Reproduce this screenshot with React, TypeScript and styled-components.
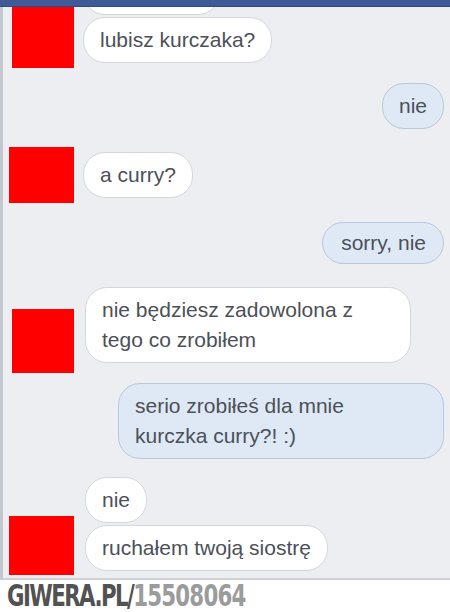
import styled, { createGlobalStyle } from "styled-components"

const GlobalStyle = createGlobalStyle`
    html, body {
        margin: 0;
        padding: 0;
        background: #ffffff;
    }
    body {
        font-family: 'Liberation Sans', Arial, sans-serif;
    }
`

type Incoming = {
    texts: (string | string[])[]
    avatar: { x: number; w: number; h: number }
    gap: number
    lift: number
    top: number
    wide?: boolean
    hiddenFirst?: boolean
}

type Outgoing = {
    text: string | string[]
    top: number
    wide?: boolean
    tight?: boolean
}

type Entry = ({ kind: 'in' } & Incoming) | ({ kind: 'out' } & Outgoing)

const conversation: Entry[] = [
    { kind: 'in', texts: ['', 'lubisz kurczaka?'], avatar: { x: 12, w: 62, h: 72 }, gap: 9, lift: 5, top: -38, hiddenFirst: true },
    { kind: 'out', text: 'nie', top: 15 },
    { kind: 'in', texts: ['a curry?'], avatar: { x: 9, w: 65, h: 56 }, gap: 9, lift: 5, top: 18 },
    { kind: 'out', text: 'sorry, nie', top: 19, tight: true },
    { kind: 'in', texts: [['nie będziesz zadowolona z', 'tego co zrobiłem']], avatar: { x: 12, w: 62, h: 64 }, gap: 11, lift: 10, top: 23, wide: true },
    { kind: 'out', text: ['serio zrobiłeś dla mnie', 'kurczka curry?! :)'], top: 10, wide: true },
    { kind: 'in', texts: ['nie', 'ruchałem twoją siostrę'], avatar: { x: 9, w: 65, h: 59 }, gap: 11, lift: 4, top: 18 },
]

function Lines({ text }: { text: string | string[] }) {
    if (typeof text === 'string') return <>{text}</>
    return (
        <>
            {text.map((line, i) => (
                <span key={i}>
                    {line}
                    {i < text.length - 1 ? <br /> : null}
                </span>
            ))}
        </>
    )
}

export default function App() {
    return (
        <Page>
            <GlobalStyle />
            <TopBar />
            <Chat>
                {conversation.map((entry, i) =>
                    entry.kind === 'in' ? (
                        <Group key={i} $top={entry.top}>
                            <Avatar $x={entry.avatar.x} $w={entry.avatar.w} $h={entry.avatar.h} />
                            <Stack $gap={entry.gap} $lift={entry.lift}>
                                {entry.texts.map((t, j) => (
                                    <Bubble
                                        key={j}
                                        $wide={entry.wide}
                                        $blank={entry.hiddenFirst && j === 0}
                                    >
                                        <Lines text={t} />
                                    </Bubble>
                                ))}
                            </Stack>
                        </Group>
                    ) : (
                        <OwnRow key={i} $top={entry.top}>
                            <Bubble $mine $wide={entry.wide} $tight={entry.tight}>
                                <Lines text={entry.text} />
                            </Bubble>
                        </OwnRow>
                    )
                )}
            </Chat>
            <Footer>
                <Mark>
                    <Site>GIWERA.PL/</Site>
                    <PostId>15508064</PostId>
                </Mark>
            </Footer>
        </Page>
    )
}

const Page = styled.div`
    width: 450px;
    height: 612px;
    display: flex;
    flex-direction: column;
    overflow: hidden;
`
const TopBar = styled.div`
    height: 6px;
    flex-shrink: 0;
    background: #3e5a97;
    border-bottom: 1px solid #2f4a82;
`
const Chat = styled.div`
    height: 571px;
    flex-shrink: 0;
    display: flex;
    flex-direction: column;
    overflow: hidden;
    background: #edeef1;
    border-left: 3px solid #c3c7ce;
    border-bottom: 2px solid #cfd1d5;
`
const Group = styled.div<{ $top: number }>`
    display: flex;
    align-items: flex-end;
    margin-top: ${p => p.$top}px;
    flex-shrink: 0;
`
const Avatar = styled.div<{ $x: number; $w: number; $h: number }>`
    width: ${p => p.$w}px;
    height: ${p => p.$h}px;
    margin-left: ${p => p.$x - 3}px;
    background: #fe0000;
    flex-shrink: 0;
`
const Stack = styled.div<{ $gap: number; $lift: number }>`
    display: flex;
    flex-direction: column;
    align-items: flex-start;
    gap: 2px;
    margin-left: ${p => p.$gap}px;
    margin-bottom: ${p => p.$lift}px;
`
const OwnRow = styled.div<{ $top: number }>`
    display: flex;
    justify-content: flex-end;
    margin-top: ${p => p.$top}px;
    padding-right: 6px;
    flex-shrink: 0;
`
const Bubble = styled.div<{ $mine?: boolean; $wide?: boolean; $tight?: boolean; $blank?: boolean }>`
    box-sizing: border-box;
    padding: ${p => (p.$tight ? '5px 17px 5px 18px' : '7px 16px')};
    ${p => (p.$wide ? 'width: 326px;' : '')}
    ${p => (p.$blank ? 'width: 137px; height: 46px;' : '')}
    font-size: 21px;
    line-height: 30px;
    color: #4c5057;
    white-space: nowrap;
    border-radius: 22px;
    background: ${p => (p.$mine ? '#dfe9f6' : '#ffffff')};
    border: 1px solid ${p => (p.$mine ? '#b9c8da' : '#d4d7dc')};
`
const Footer = styled.div`
    flex: 1;
    display: flex;
    align-items: center;
    padding-left: 7px;
    background: #ffffff;
    font-family: 'Liberation Sans Narrow', 'DejaVu Sans Condensed', 'Liberation Sans', sans-serif;
    font-weight: 700;
    font-size: 30px;
    line-height: 30px;
`
const Mark = styled.span`
    display: inline-block;
    white-space: nowrap;
    transform: scaleX(0.79);
    transform-origin: left center;
`
const Site = styled.span`
    color: #525252;
    letter-spacing: -2px;
`
const PostId = styled.span`
    color: #9b9b9b;
    letter-spacing: -1px;
`
